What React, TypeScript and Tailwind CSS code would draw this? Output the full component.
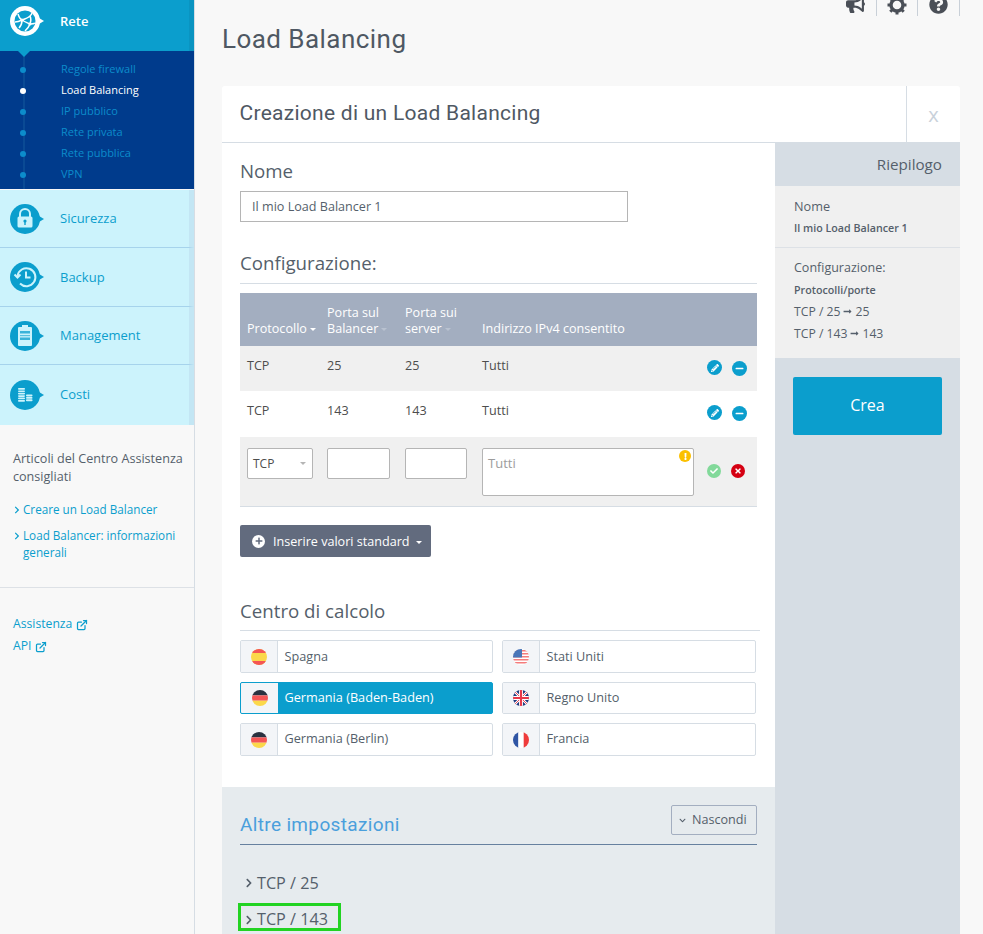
import { FaBullhorn, FaQuestionCircle, FaPencilAlt, FaMinus, FaCheck, FaTimes, FaPlus, FaChevronDown, FaChevronRight, FaExclamation, FaLongArrowAltRight } from 'react-icons/fa'
import { FiExternalLink } from 'react-icons/fi'
import type { ReactNode } from 'react'

const subLinks = ['Regole firewall', 'Load Balancing', 'IP pubblico', 'Rete privata', 'Rete pubblica', 'VPN']

function Bubble({ dark, children }: { dark?: boolean; children: ReactNode }) {
  const bg = dark ? '#ffffff' : '#0b9ecd'
  return (
    <svg width="36" height="32" viewBox="0 0 36 32" className="shrink-0">
      <circle cx="15" cy="16" r="15" fill={bg} />
      <path d="M29 13l5 3-5 3z" fill={bg} />
      {children}
    </svg>
  )
}

const GlobeIcon = () => (
  <g>
    <circle cx="15" cy="16" r="10.5" fill="#0b9ecd" />
    <path d="M8 9c1 3 2 5 4 6 3-1 6-2 8-4M12 15c0 3-1 6-3 8M12 15c3 2 6 3 8 4 1-3 1-6 0-8 1-1 2-2 2-3M20 19c-1 3-3 5-5 7M20 19c2 0 4 0 5-1M5 17c3 0 5-1 7-2" fill="none" stroke="#fff" strokeWidth="1.5" />
    <circle cx="12" cy="15" r="1.6" fill="#fff" />
    <circle cx="20" cy="19" r="1.6" fill="#fff" />
  </g>
)
const LockIcon = () => (
  <g>
    <path d="M10 14v-3a5 5 0 0110 0v3" fill="none" stroke="#ccf3fc" strokeWidth="2" />
    <rect x="7.5" y="13.5" width="15" height="11" rx="1.5" fill="#ccf3fc" />
    <circle cx="15" cy="18" r="1.6" fill="#0b9ecd" />
    <rect x="14.3" y="18" width="1.4" height="4" fill="#0b9ecd" />
  </g>
)
const ClockIcon = () => (
  <g fill="none" stroke="#ccf3fc" strokeWidth="2">
    <path d="M7.5 15a9 9 0 112.5 7.5" />
    <path d="M4.5 13.5l3 3 3-3" />
    <path d="M16 10.5v6h4.5" />
  </g>
)
const ClipboardIcon = () => (
  <g>
    <rect x="8" y="7" width="14" height="19" rx="1" fill="#ccf3fc" />
    <rect x="12" y="5" width="6" height="3" fill="#ccf3fc" />
    <rect x="10" y="11" width="10" height="2.5" fill="#0b9ecd" opacity="0.75" />
    <rect x="10" y="15" width="10" height="1.2" fill="#0b9ecd" opacity="0.6" />
    <rect x="10" y="17.5" width="10" height="2.5" fill="#0b9ecd" opacity="0.75" />
  </g>
)
const CoinsIcon = () => (
  <g fill="#ccf3fc">
    {[9, 11.4, 13.8, 16.2, 18.6, 21].map((y) => <rect key={y} x="8" y={y} width="7" height="1.7" rx="0.8" />)}
    {[15.5, 17.9, 20.3].map((y) => <rect key={y} x="16" y={y} width="6.5" height="1.9" rx="0.8" />)}
  </g>
)

const GearIcon = () => (
  <svg width="20" height="20" viewBox="0 0 20 20">
    <circle cx="10" cy="10" r="6" fill="none" stroke="currentColor" strokeWidth="3.4" />
    {[0, 45, 90, 135, 180, 225, 270, 315].map((a) => (
      <rect key={a} x="8.5" y="0.5" width="3" height="3.5" fill="currentColor" transform={`rotate(${a} 10 10)`} />
    ))}
  </svg>
)

const menu = [
  { label: 'Sicurezza', icon: <LockIcon />, h: 'h-[58px]', text: '' },
  { label: 'Backup', icon: <ClockIcon />, h: 'h-[59px]', text: 'pt-[2px]' },
  { label: 'Management', icon: <ClipboardIcon />, h: 'h-[58px]', text: '' },
  { label: 'Costi', icon: <CoinsIcon />, h: 'h-[60px]', text: '' },
]

function Flag({ name, id }: { name: string; id: string }) {
  return (
    <svg width="16" height="16" viewBox="0 0 16 16">
      <clipPath id={id}><circle cx="8" cy="8" r="8" /></clipPath>
      <g clipPath={`url(#${id})`}>
        {name === 'es' && <>
          <rect width="16" height="16" fill="#fbd84a" />
          <rect width="16" height="4" fill="#f45656" />
          <rect y="12" width="16" height="4" fill="#f45656" />
        </>}
        {name === 'de' && <>
          <rect width="16" height="5.4" fill="#2a3240" />
          <rect y="5.4" width="16" height="5.3" fill="#f45656" />
          <rect y="10.7" width="16" height="5.3" fill="#fbd84a" />
        </>}
        {name === 'us' && <>
          <rect width="16" height="16" fill="#fff" />
          {[1, 4, 7, 10, 13].map((y) => <rect key={y} y={y} width="16" height="1.5" fill="#f47c7c" />)}
          <rect width="9" height="8.5" fill="#4a76b8" />
        </>}
        {name === 'uk' && <>
          <rect width="16" height="16" fill="#1f3b80" />
          <path d="M0 0l16 16M16 0L0 16" stroke="#fff" strokeWidth="2.4" />
          <path d="M0 0l16 16M16 0L0 16" stroke="#e8374a" strokeWidth="0.9" />
          <path d="M8 0v16M0 8h16" stroke="#fff" strokeWidth="4" />
          <path d="M8 0v16M0 8h16" stroke="#e8374a" strokeWidth="2.2" />
        </>}
        {name === 'fr' && <>
          <rect width="5.4" height="16" fill="#2f55a4" />
          <rect x="5.4" width="5.3" height="16" fill="#fff" />
          <rect x="10.7" width="5.3" height="16" fill="#ef3b3b" />
        </>}
      </g>
    </svg>
  )
}

function Region({ flag, label, active, h, top }: { flag: string; label: string; active?: boolean; h: string; top?: boolean }) {
  return (
    <div className={`flex ${h} rounded-[2px] border overflow-hidden ${active ? 'border-[#0b9ecd] bg-[#0b9ecd] text-white' : 'border-[#d6dde4] bg-white text-[#555f6b]'}`}>
      <div className={`w-[37px] shrink-0 flex items-center justify-center bg-[#f3f5f8] ${active ? '' : 'border-r border-[#d6dde4]'}`}>
        <Flag name={flag} id={`flag-${label.replace(/\W/g, '')}`} />
      </div>
      <div className={`pl-[6.5px] flex items-center text-[12.7px] ${top ? '' : 'pb-[1px]'}`}>{label}</div>
    </div>
  )
}

function Row({ port, bg }: { port: string; bg: string }) {
  return (
    <div className={`flex h-[45px] text-[12.6px] text-[#4d4d4d] ${bg}`}>
      <div className="w-[87px] pl-[7px] pt-[11px]">TCP</div>
      <div className="w-[78px] pt-[11px]">{port}</div>
      <div className="w-[77px] pt-[11px]">{port}</div>
      <div className="flex-1 pt-[11px]">Tutti</div>
      <div className="flex items-start gap-[10px] pr-[10px] pt-[14px]">
        <span className="w-[15px] h-[15px] rounded-full bg-[#0b9ecd] flex items-center justify-center text-white"><FaPencilAlt size={8} /></span>
        <span className="mt-[1px] w-[15px] h-[15px] rounded-full bg-[#0b9ecd] flex items-center justify-center text-white"><FaMinus size={9} /></span>
      </div>
    </div>
  )
}

const Caret = ({ light }: { light?: boolean }) => (
  <span className={`inline-block ml-[3px] align-middle border-x-[3px] border-t-[3px] border-x-transparent ${light ? 'border-t-[#b9c2d0]' : 'border-t-white'}`} />
)

export default function App() {
  return (
    <div className="h-[934px] w-[983px] overflow-hidden flex bg-[#f8f8f8] text-[#4d4d4d] font-['Open_Sans',sans-serif]">
      <aside className="w-[195px] shrink-0 border-r border-[#d6dde4] h-full">
        <div className="h-[51px] bg-[#0b9ecd] border-r-[5px] border-[#0a94c1] flex items-center pl-[10px] pb-[10px] gap-[14px] relative">
          <Bubble dark><GlobeIcon /></Bubble>
          <span className="text-white text-[13px] font-semibold mt-[3px]">Rete</span>
          <span className="absolute left-[18px] -bottom-[6px] border-x-[6px] border-t-[6px] border-x-transparent border-t-[#0b9ecd] z-10" />
        </div>
        <div className="h-[138px] bg-[#003b8c] relative pt-[8px]">
          <span className="absolute left-[23px] top-0 bottom-0 w-[2px] bg-[#0a4a94]" />
          {subLinks.map((l) => (
            <div key={l} className={`h-[21px] flex items-center gap-[35px] pl-[20px] text-[11px] relative ${l === 'Load Balancing' ? 'text-white' : 'text-[#0c8ccb]'}`}>
              <span className={`w-[6px] h-[6px] rounded-full ${l === 'Load Balancing' ? 'bg-white' : 'bg-[#0c8ccb]'}`} />
              <span>{l}</span>
            </div>
          ))}
        </div>
        <div className="mt-[1px]">
          {menu.map((m, i) => (
            <div key={m.label} className={`${m.h} bg-[#ccf3fc] border-r-[5px] border-r-[#c3e6f4] flex items-center pl-[10px] gap-[14px] ${i < 3 ? 'border-b border-b-[#a6d3ec]' : ''}`}>
              <Bubble>{m.icon}</Bubble>
              <span className={`text-[13px] text-[#0b9ecd] ${m.text}`}>{m.label}</span>
            </div>
          ))}
        </div>
        <div className="pl-[13px] pr-[8px] pt-[25px] pb-[26px] border-b border-[#dde1e6]">
          <p className="text-[12.6px] leading-[18px] text-[#555f6b]">Articoli del Centro Assistenza consigliati</p>
          <a className="mt-[15px] flex gap-[2px] text-[11.7px] leading-[17px] text-[#0b9ecd]">
            <FaChevronRight size={8} className="mt-[5px] shrink-0" />Creare un Load Balancer
          </a>
          <a className="mt-[9px] flex gap-[2px] text-[11.7px] leading-[17px] text-[#0b9ecd]">
            <FaChevronRight size={8} className="mt-[5px] shrink-0" />Load Balancer: informazioni generali
          </a>
        </div>
        <div className="px-[13px] pt-[28px] text-[12.2px] text-[#0b9ecd]">
          <div className="flex items-center gap-[4px] h-[17px]">Assistenza <FiExternalLink size={12} strokeWidth={2.5} /></div>
          <div className="flex items-center gap-[4px] h-[17px] mt-[5px]">API <FiExternalLink size={12} strokeWidth={2.5} /></div>
        </div>
      </aside>

      <main className="w-[765px] shrink-0 pl-[27px]">
        <div className="h-[16px] overflow-hidden flex justify-end text-[#4a4f57]">
          <div className="w-[41px] border-r border-[#c9d0d8] flex justify-center -mt-[5px] pr-[1px]"><FaBullhorn size={19} /></div>
          <div className="w-[41px] border-r border-[#c9d0d8] flex justify-center -mt-[5px]"><GearIcon /></div>
          <div className="w-[42px] border-r border-[#c9d0d8] flex justify-center -mt-[5px]"><FaQuestionCircle size={19} /></div>
        </div>
        <h1 className="mt-[5px] h-[36px] text-[26px] leading-[36px] text-[#4f5863] font-['Roboto',sans-serif] tracking-[0.45px]">Load Balancing</h1>
        <div className="mt-[29px] rounded-t-[3px] overflow-hidden">
          <div className="h-[57px] bg-white border-b border-[#d6dde4] flex">
            <div className="flex-1 pl-[17.5px] flex items-center text-[21px] text-[#4f5863] font-['Roboto',sans-serif] tracking-[0.27px]">Creazione di un Load Balancing</div>
            <div className="w-[54px] border-l border-[#d6dde4] flex items-center justify-center text-[20px] text-[#c9d1da] pt-[2px]">x</div>
          </div>
          <div className="flex h-[792px]">
            <div className="w-[553px] shrink-0 bg-white">
              <div className="px-[18px] pt-[15px] relative">
                <div className="text-[18.7px] leading-[25px] text-[#555f6b]">Nome</div>
                <div className="mt-[8px] w-[388px] h-[31px] border border-[#b5b5b5] flex items-center pl-[11px] pt-[1px] text-[12.6px] text-[#555f6b]">Il mio Load Balancer 1</div>
                <div className="mt-[28px] text-[18.7px] leading-[25px] pb-[8px] border-b border-[#d6dde4] text-[#555f6b]">Configurazione:</div>
                <div className="mt-[9px] h-[53px] bg-[#a3aec0] flex items-end pb-[9px] text-[12.6px] leading-[16px] text-white">
                  <div className="w-[87px] pl-[7px]">Protocollo<Caret /></div>
                  <div className="w-[78px]">Porta sul<br />Balancer<Caret light /></div>
                  <div className="w-[77px]">Porta sui<br />server<Caret light /></div>
                  <div>Indirizzo IPv4 consentito</div>
                </div>
                <Row port="25" bg="bg-[#f0f0f0]" />
                <Row port="143" bg="bg-white" />
                <div className="flex h-[70px] mt-[1px] bg-[#f0f0f0] border-b border-[#d6dde4] pt-[11px] text-[12px]">
                  <div className="w-[87px] pl-[7px]">
                    <div className="w-[66px] h-[31px] rounded-[2px] border border-[#b5b5b5] bg-white flex items-center justify-between pl-[5px] pr-[6px]">TCP<span className="border-x-[3px] border-t-[3px] border-x-transparent border-t-[#b5b5b5]" /></div>
                  </div>
                  <div className="w-[78px]"><div className="w-[63px] h-[31px] rounded-[2px] border border-[#b5b5b5] bg-white" /></div>
                  <div className="w-[77px]"><div className="w-[62px] h-[31px] rounded-[2px] border border-[#b5b5b5] bg-white" /></div>
                  <div className="w-[212px] h-[48px] rounded-[2px] border border-[#b5b5b5] bg-white relative pl-[5px] pt-[5px] text-[13px] text-[#9c9c9c]">
                    Tutti
                    <span className="absolute right-[2px] top-[1px] w-[12px] h-[12px] rounded-full bg-[#fbc000] flex items-center justify-center text-white"><FaExclamation size={7} /></span>
                  </div>
                  <div className="flex items-start gap-[10px] ml-[13px] pt-[16px]">
                    <span className="w-[14px] h-[14px] rounded-full bg-[#82d99a] flex items-center justify-center text-white"><FaCheck size={8} /></span>
                    <span className="w-[14px] h-[14px] rounded-full bg-[#d50012] flex items-center justify-center text-white"><FaTimes size={8} /></span>
                  </div>
                </div>
                <button className="mt-[18px] w-[191px] h-[32px] rounded-[2px] bg-[#626b7e] text-white text-[12.6px] flex items-center pl-[12px] gap-[8px]">
                  <span className="w-[13px] h-[13px] rounded-full bg-white flex items-center justify-center text-[#626b7e]"><FaPlus size={8} /></span>
                  <span className="pt-[2px]">Inserire valori standard <Caret /></span>
                </button>
                <div className="mt-[41px] -mr-[3px] text-[18.7px] leading-[25px] pb-[7px] border-b border-[#d6dde4] text-[#555f6b]">Centro di calcolo</div>
                <div className="mt-[9px] grid grid-cols-[253px_254px] gap-x-[9px] gap-y-[9px]">
                  <Region flag="es" label="Spagna" h="h-[33px]" top />
                  <Region flag="us" label="Stati Uniti" h="h-[33px]" top />
                  <Region flag="de" label="Germania (Baden-Baden)" active h="h-[32px]" />
                  <Region flag="uk" label="Regno Unito" h="h-[32px]" />
                  <Region flag="de" label="Germania (Berlin)" h="h-[33px]" />
                  <Region flag="fr" label="Francia" h="h-[33px]" />
                </div>
              </div>
              <div className="mt-[31px] h-[147px] bg-[#e6ebee] px-[18px] pt-[18px]">
                <div className="flex justify-between items-start h-[40px] border-b border-[#66809f]">
                  <div className="text-[19px] leading-[26px] text-[#4a9fdc] pt-[7px] font-['Roboto',sans-serif] tracking-[0.35px]">Altre impostazioni</div>
                  <div className="w-[86px] h-[30px] rounded-[2px] border border-[#a3aec0] flex items-center pl-[7px] gap-[6px] text-[12.6px] text-[#555f6b]">
                    <FaChevronDown size={7} />Nascondi
                  </div>
                </div>
                <div className="mt-[24px] flex items-center gap-[3px] pl-[4px] h-[28px] text-[16.2px] text-[#555f6b] whitespace-nowrap">
                  <FaChevronRight size={10} />TCP / 25
                </div>
                <div className="mt-[6px] -ml-[2px] w-[103px] h-[28px] flex items-center gap-[3px] pl-[3px] pt-[5px] border-[3px] border-[#22d322] text-[16.2px] text-[#555f6b] whitespace-nowrap">
                  <FaChevronRight size={10} />TCP / 143
                </div>
              </div>
            </div>
            <div className="w-[185px] shrink-0 bg-[#d6dde4]">
              <div className="h-[43px] flex items-center justify-end pr-[18px] text-[15.2px] text-[#555f6b]">Riepilogo</div>
              <div className="bg-[#f0f0f0] h-[172px] text-[#555f6b]">
                <div className="h-[62px] border-b border-[#dde1e6] pl-[19px] pt-[10px]">
                  <div className="text-[12.7px] leading-[20px]">Nome</div>
                  <div className="mt-[4px] text-[10.7px] font-semibold leading-[16px]">Il mio Load Balancer 1</div>
                </div>
                <div className="pl-[19px] pt-[10px]">
                  <div className="text-[12.5px] leading-[20px]">Configurazione:</div>
                  <div className="mt-[4px] text-[10.7px] font-semibold leading-[16px]">Protocolli/porte</div>
                  <div className="mt-[4px] flex items-center gap-[3px] text-[12.2px] leading-[19px]">TCP / 25<FaLongArrowAltRight size={9} />25</div>
                  <div className="mt-[3px] flex items-center gap-[3px] text-[12.2px] leading-[19px]">TCP / 143<FaLongArrowAltRight size={9} />143</div>
                </div>
              </div>
              <button className="mt-[19px] ml-[18px] w-[149px] h-[58px] rounded-[2px] bg-[#0b9ecd] text-white text-[16px] pb-[2px]">Crea</button>
            </div>
          </div>
        </div>
      </main>
    </div>
  )
}
